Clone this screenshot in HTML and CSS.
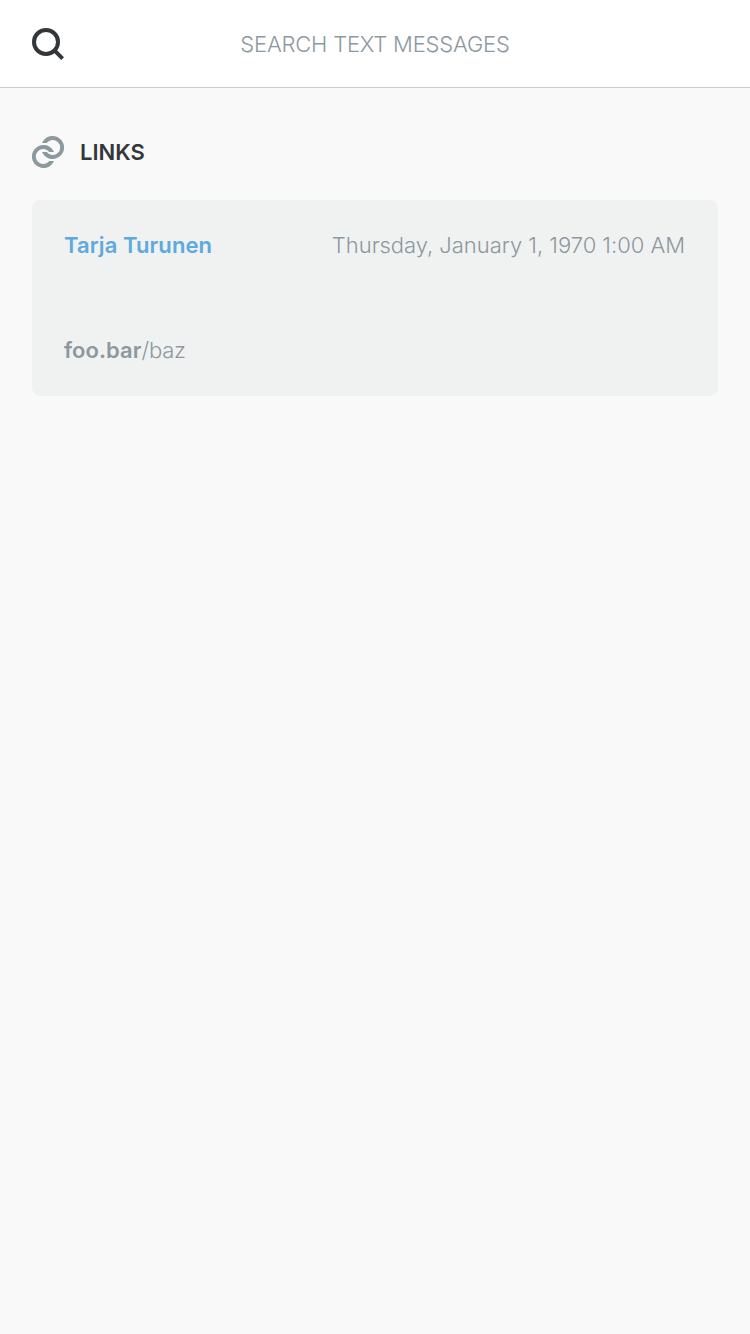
FILE: index.html
```html
<!DOCTYPE html>
<html lang="en">
<head>
<meta charset="utf-8">
<title>Search</title>
<link rel="stylesheet" href="styles.css">
</head>
<body>
<header class="search-bar">
  <svg class="icon icon-search" viewBox="0 0 32 32"><circle cx="14" cy="14" r="12"/><path d="M22.2 22.2L30.6 30.6"/></svg>
  <div class="search-hint">SEARCH TEXT MESSAGES</div>
</header>
<main class="content">
  <div class="section-head">
    <svg class="icon icon-link" viewBox="0 0 32 32"><path d="M22 25A11.5 11.5 0 1 1 22 16H17.3A7.5 7.5 0 1 0 17.3 25Z"/><path d="M10 7A11.5 11.5 0 1 1 10 16H14.7A7.5 7.5 0 1 0 14.7 7Z"/></svg>
    <h1 class="section-title">LINKS</h1>
  </div>
  <article class="card">
    <div class="card-head">
      <span class="sender">Tarja Turunen</span>
      <time class="date">Thursday, January 1, 1970 1:00 AM</time>
    </div>
    <div class="link"><b class="host">foo.bar</b><span class="path">/baz</span></div>
  </article>
</main>
</body>
</html>
```
FILE: styles.css
```css
* { box-sizing: border-box; }
body {
  margin: 0;
  min-height: 1334px;
  background: #f9f9f9;
  color: #8d989f;
  font: 300 22px/26px Inter, "Liberation Sans", sans-serif;
  white-space: nowrap;
}
.search-bar {
  display: grid;
  grid-template-columns: 32px 1fr 32px;
  align-items: center;
  height: 88px;
  padding: 0 32px;
  background: #fff;
  border-bottom: 1px solid #c5ced3;
}
.icon { display: block; width: 32px; height: 32px; }
.icon-search { fill: none; stroke: #33373a; stroke-width: 4; }
.icon-link { fill: #8d989f; }
.search-hint { text-align: center; letter-spacing: -0.2px; }
.content { padding: 48px 32px; }
.section-head { display: flex; align-items: center; gap: 16px; height: 32px; }
.section-title { margin: 0; font-size: 22px; font-weight: 600; color: #33373a; }
.card {
  height: 196px;
  margin-top: 32px;
  padding: 32px;
  border-radius: 8px;
  background: #f0f2f1;
}
.card-head { display: flex; justify-content: space-between; }
.sender { font-weight: 600; letter-spacing: 0.08px; color: #5ea9dd; }
.date { margin-right: 1px; letter-spacing: -0.03px; }
.link { margin-top: 79px; }
.host { font-weight: 600; letter-spacing: 0.05px; }
.path { letter-spacing: -0.2px; }
```
